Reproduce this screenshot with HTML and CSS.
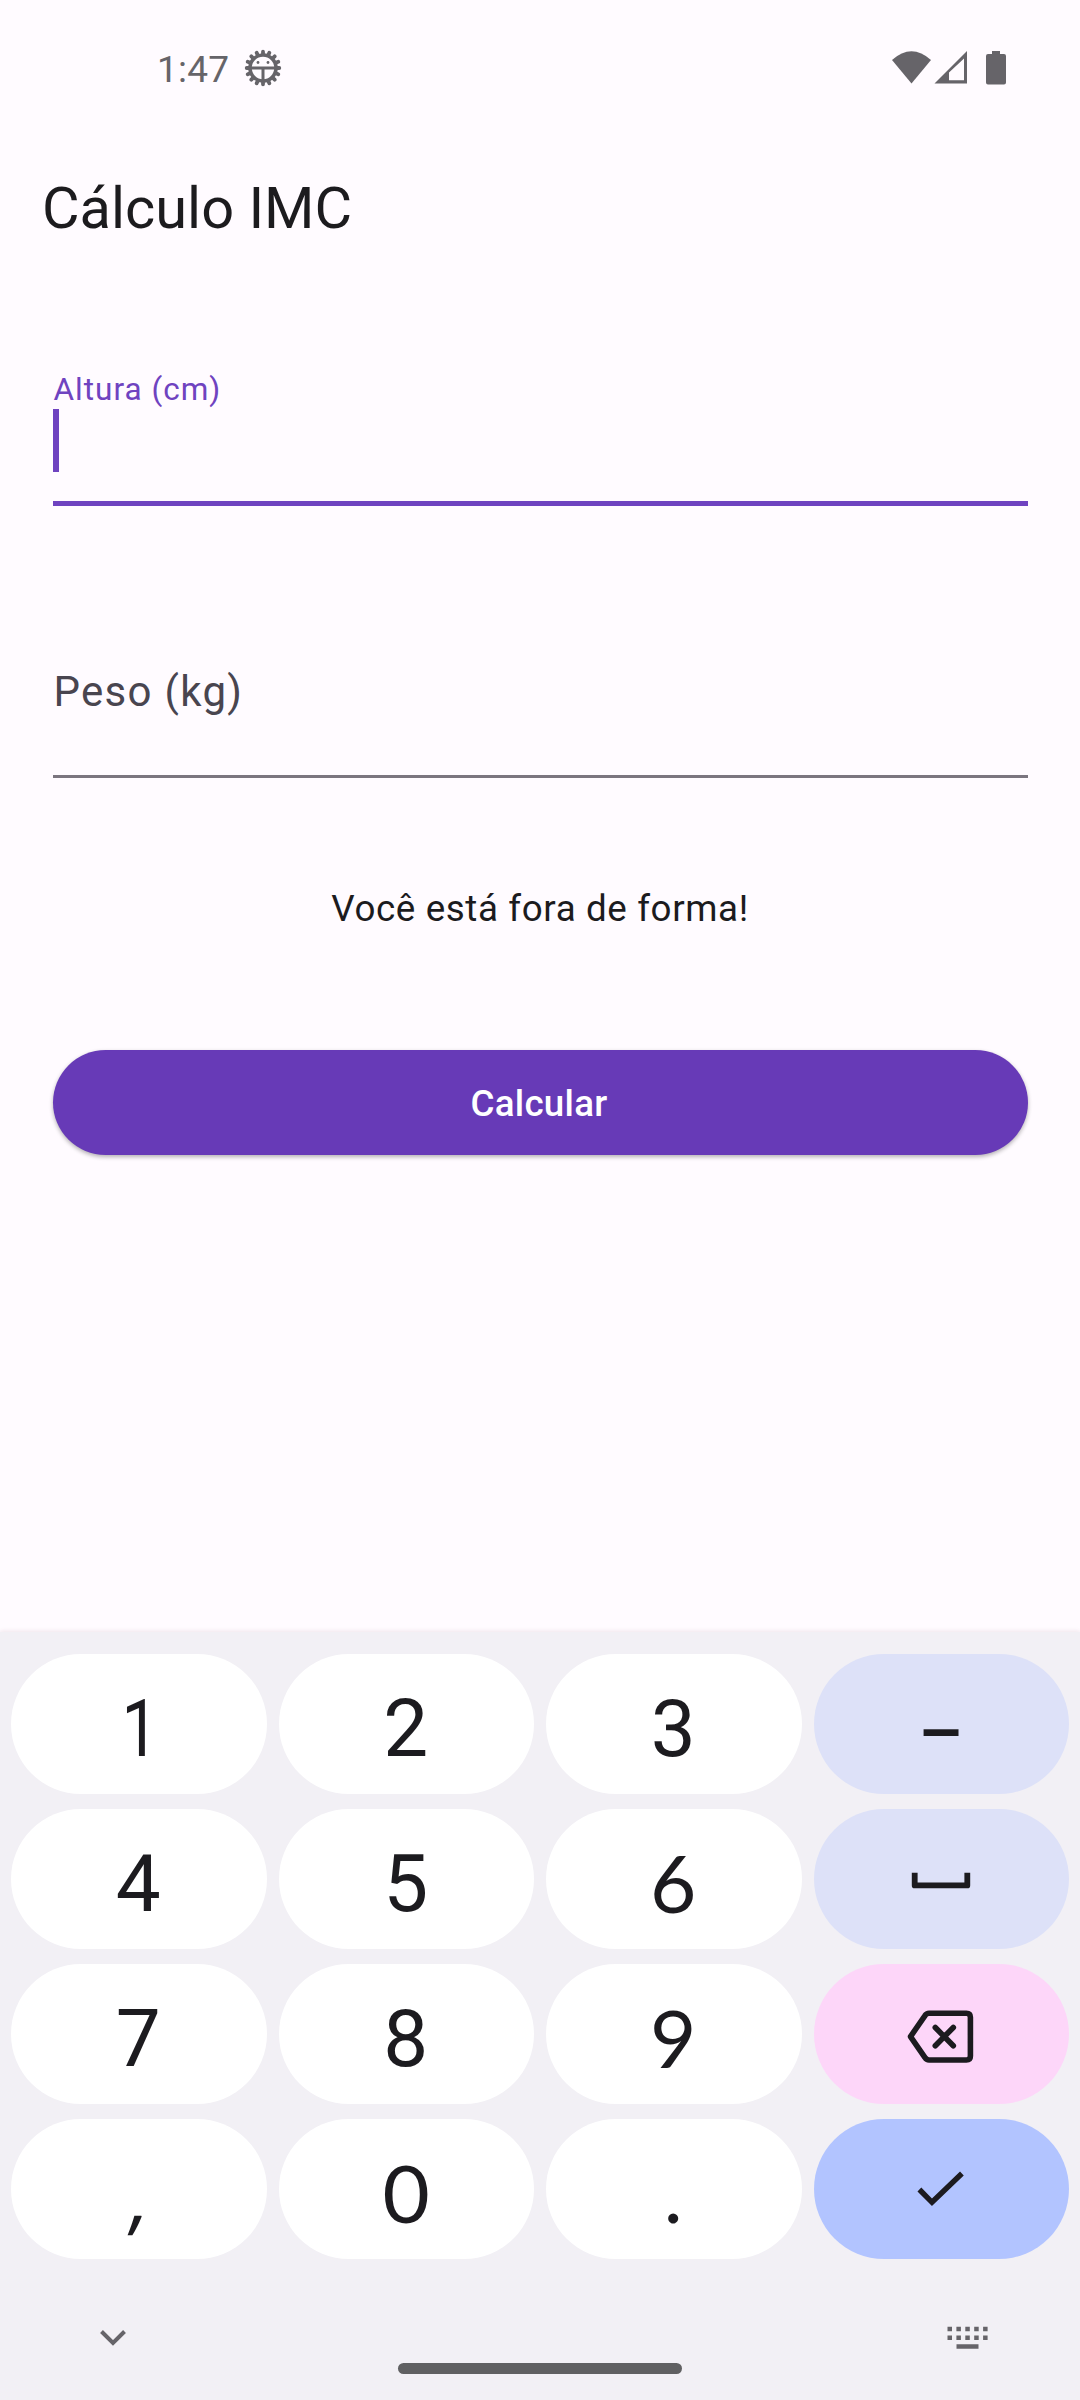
FILE: index.html
```html
<!DOCTYPE html>
<html lang="pt-BR">
<head>
<meta charset="utf-8">
<title>Cálculo IMC</title>
<link rel="stylesheet" href="styles.css">
</head>
<body>
<div class="screen">
  <header class="status">
    <div class="status-left">
      <span class="clock">1:47</span>
      <svg class="gear" viewBox="-19 -19 38 38" width="38" height="38">
        <circle r="13" fill="none" stroke="#666469" stroke-width="3.600"/>
        <path fill="none" stroke="#666469" stroke-width="3.800" stroke-linecap="round" d="M0-14V-16.300M0 14V16.300M-14 0H-16.300M14 0H16.300M5.360-12.930L6.310-15.240M-5.360-12.930L-6.310-15.240M5.360 12.930L6.310 15.240M-5.360 12.930L-6.310 15.240M12.930-5.360L15.240-6.310M-12.930-5.360L-15.240-6.310M12.930 5.360L15.240 6.310M-12.930 5.360L-15.240 6.310M9.900-9.900L11.670-11.670M-9.900-9.900L-11.670-11.670M9.900 9.900L11.670 11.670M-9.900 9.900L-11.670 11.670"/>
        <path d="M-12 0H12M0 0V13" fill="none" stroke="#666469" stroke-width="3"/>
        <circle cx="-5" cy="-5.500" r="1.400" fill="#666469"/>
        <circle cx="5" cy="-5.500" r="1.400" fill="#666469"/>
      </svg>
    </div>
    <svg class="signals" viewBox="0 0 116 36" width="116" height="36" fill="#666469">
      <path d="M0 10Q19.500-7.500 39 10L19.500 33.500Z"/>
      <path fill-rule="evenodd" d="M42.500 33.500L75 1V33.500ZM57 22.500V30.300H72V8.500Z"/>
      <path d="M100 1H108V4H112Q114 4 114 6V32.500Q114 34.500 112 34.500H96Q94 34.500 94 32.500V6Q94 4 96 4H100Z"/>
    </svg>
  </header>
  <h1 class="title">Cálculo IMC</h1>
  <main class="form">
    <div class="field focused">
      <label class="label">Altura (cm)</label>
      <span class="caret"></span>
    </div>
    <div class="field">
      <label class="label">Peso (kg)</label>
    </div>
    <p class="result">Você está fora de forma!</p>
    <button class="submit">Calcular</button>
  </main>
  <section class="keyboard">
    <div class="keys">
      <span class="key"><span class="one">1</span></span><span class="key">2</span><span class="key">3</span><span class="key tonal"><span class="dash">–</span></span>
      <span class="key">4</span><span class="key">5</span><span class="key"><span class="open">6</span></span>
      <span class="key tonal"><svg viewBox="0 0 80 80" width="80" height="80"><path d="M13.700 33.700V46.400H66.300V33.700" stroke-width="5.800" stroke-linejoin="round"/></svg></span>
      <span class="key">7</span><span class="key">8</span><span class="key"><span class="open">9</span></span>
      <span class="key delete"><svg viewBox="0 0 80 80" width="80" height="80" stroke-width="5.600" stroke-linecap="round" stroke-linejoin="round"><path d="M28 19.200H65.400Q69.400 19.200 69.400 23.200V62Q69.400 66 65.400 66H28Q25.500 66 24 63.600L9.500 42.600L24 21.600Q25.500 19.200 28 19.200ZM34.300 33.500L52.300 51.800M52.300 33.500L34.300 51.800"/></svg></span>
      <span class="key"><span class="comma">,</span></span><span class="key"><span class="open zero">0</span></span><span class="key"><span class="open">.</span></span>
      <span class="key enter"><svg viewBox="0 0 80 80" width="80" height="80"><path d="M18.400 40.500L31 53.300L60.900 24.500" stroke-width="5.400"/></svg></span>
    </div>
    <div class="tools">
      <svg viewBox="0 0 26 16" width="26" height="16"><path d="M1.500 1.500L13 13L24.500 1.500" fill="none" stroke="#666469" stroke-width="4"/></svg>
      <svg viewBox="0 0 42 24" width="42" height="24" fill="none" stroke="#666469"><path d="M.5 2.900H42M.5 11.700H42" stroke-width="4.500" stroke-dasharray="4.500 4.400"/><path d="M9.500 20.500H31.500" stroke-width="4.500"/></svg>
    </div>
    <div class="home"></div>
  </section>
</div>
</body>
</html>
```
FILE: styles.css
```css
* { box-sizing: border-box; }
body { margin: 0; }
.screen {
  width: 1080px;
  height: 2400px;
  display: flex;
  flex-direction: column;
  background: #fffbff;
  color: #1c1b1e;
  font-family: Roboto, "Liberation Sans", sans-serif;
  overflow: hidden;
}
.status {
  height: 136px;
  padding: 0 72px 0 157px;
  display: flex;
  align-items: center;
  justify-content: space-between;
  color: #666469;
}
.status-left { display: flex; align-items: center; gap: 15px; }
.clock { font-size: 37px; line-height: 44px; padding-top: 3px; letter-spacing: .2px; }
.title {
  margin: 0;
  height: 144px;
  padding-left: 42px;
  line-height: 144px;
  font-size: 57.75px;
  font-weight: 400;
}
.form {
  flex: 1;
  padding: 81px 52.5px 0;
  display: flex;
  flex-direction: column;
}
.field {
  height: 145px;
  border-bottom: 5px solid #6f43c0;
  color: #49454f;
  display: flex;
  flex-direction: column;
  align-items: flex-start;
}
.label { padding-left: 1px; }
.focused .label { font-size: 31.5px; line-height: 38px; letter-spacing: 1px; padding-top: 10px; height: 48px; color: #6f43c0; }
.caret { width: 5.500px; height: 63px; margin-left: .5px; background: #6f43c0; }
.field:not(.focused) { height: 148px; margin-top: 124px; padding-top: 37px; border-bottom: 3px solid #7b757f; }
.field:not(.focused) .label { font-size: 42px; line-height: 50px; letter-spacing: 1.310px; }
.result {
  margin: 107px 0 0;
  text-align: center;
  font-size: 36.75px;
  line-height: 48px;
  letter-spacing: .62px;
}
.submit {
  margin: 117px 0 0;
  padding: 2px 2px 0 0;
  height: 105px;
  border: 0;
  border-radius: 53px;
  background: #673ab7;
  color: #fff;
  font: 500 36.75px/44px Roboto, sans-serif;
  letter-spacing: .26px;
  box-shadow: 0 2px 4px rgba(0,0,0,.3);
}
.keyboard {
  height: 768px;
  padding: 22px 11px 0;
  background: #f2f0f5;
  box-shadow: 0 -1px 4px rgba(110,40,60,.1);
  display: flex;
  flex-direction: column;
}
.keys {
  display: grid;
  grid-template-columns: repeat(4, 1fr);
  grid-auto-rows: 140px;
  gap: 15px 12px;
  font-size: 80px;
  line-height: 94px;
}
.key {
  display: flex;
  align-items: center;
  justify-content: center;
  padding: 10px 1px 0 0;
  border-radius: 70px;
  background: #fff;
  color: #1c1b1f;
}
.key svg { margin-top: -10px; fill: none; stroke: #1c1b1f; }
.one { padding-left: 5px; transform: scaleX(.82); }
.tonal { background: #dde1f8; }
.delete { background: #fdd6f9; }
.enter { background: #b2c4ff; }
.open { font-family: Lato, sans-serif; padding-bottom: 5px; }
.zero { transform: scaleX(1.02); }
.comma { font-family: "Open Sans", sans-serif; padding-left: 4px; transform: skewX(-8deg); }
.dash { font-size: 70px; font-weight: 500; padding-top: 10px; }
.tools {
  margin: 67px 80px 0 89px;
  display: flex;
  justify-content: space-between;
  align-items: center;
}
.home {
  width: 284px;
  height: 11px;
  margin: 13px auto 0;
  border-radius: 6px;
  background: #606062;
}
```
